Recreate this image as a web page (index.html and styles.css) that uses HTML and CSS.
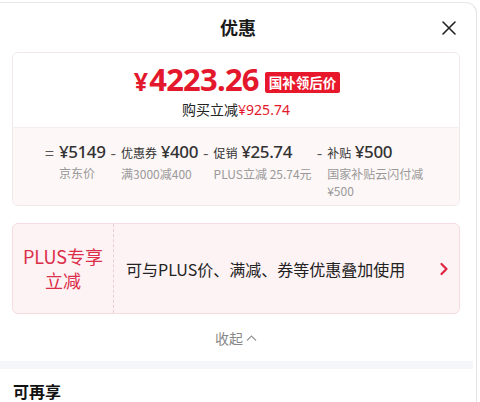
FILE: index.html
```html
<!DOCTYPE html>
<html lang="zh-CN">
<head>
<meta charset="utf-8">
<link rel="stylesheet" href="styles.css">
</head>
<body>
<div class="panel">
  <div class="header">
    <div class="title">优惠</div>
    <svg class="close" width="16" height="16" viewBox="0 0 16 16"><path d="M2 2 L14 14 M14 2 L2 14" stroke="#222" stroke-width="1.6" fill="none" stroke-linecap="round"/></svg>
  </div>

  <div class="card">
    <div class="card-top">
      <div class="price-line">
        <span class="price"><span class="yen">¥</span>4223.26</span>
        <span class="badge">国补领后价</span>
      </div>
      <div class="save">购买立减<span class="red">¥925.74</span></div>
    </div>
    <div class="card-bottom">
      <div class="calc">
        <span class="op">=</span>
        <div class="col">
          <div class="val"><span class="num">¥5149</span></div>
          <div class="lbl">京东价</div>
        </div>
        <span class="op">-</span>
        <div class="col">
          <div class="val"><span class="kind">优惠券</span> <span class="num">¥400</span></div>
          <div class="lbl">满3000减400</div>
        </div>
        <span class="op">-</span>
        <div class="col">
          <div class="val"><span class="kind">促销</span> <span class="num">¥25.74</span></div>
          <div class="lbl">PLUS立减 25.74元</div>
        </div>
        <span class="op">-</span>
        <div class="col col-last">
          <div class="val"><span class="kind">补贴</span> <span class="num">¥500</span></div>
          <div class="lbl">国家补贴云闪付减¥500</div>
        </div>
      </div>
    </div>
  </div>

  <div class="plus-card">
    <div class="plus-left">PLUS专享<br>立减</div>
    <div class="plus-text">可与PLUS价、满减、券等优惠叠加使用</div>
    <svg class="chev" width="10" height="14" viewBox="0 0 10 14"><path d="M2.5 2 L7.5 7 L2.5 12" stroke="#e2233f" stroke-width="2.2" fill="none" stroke-linecap="round" stroke-linejoin="round"/></svg>
  </div>

  <div class="collapse">收起 <svg class="caret" width="11" height="8" viewBox="0 0 11 8"><path d="M1 6.5 L5.5 2 L10 6.5" stroke="#999" stroke-width="1.2" fill="none"/></svg></div>

  <div class="band"></div>

  <div class="more">可再享</div>
</div>
</body>
</html>
```

FILE: styles.css
```css
* { box-sizing: border-box; margin: 0; padding: 0; }
html, body { background: #fff; }
body {
  font-family: "Noto Sans CJK SC", "Noto Sans", sans-serif;
  color: #222;
  width: 480px;
  height: 402px;
  overflow: hidden;
}
.panel {
  margin-top: 2px;
  width: 477px;
  height: 400px;
  border-top: 1px solid #e8e8e8;
  border-right: 1px solid #e4e4e4;
  border-top-right-radius: 11px;
  background: #fff;
}
.header {
  position: relative;
  padding-top: 11px;
  height: 49px;
  text-align: center;
}
.title {
  font-size: 18px;
  font-weight: 700;
  line-height: 26px;
  color: #1a1a1a;
}
.close {
  position: absolute;
  right: 19px;
  top: 17px;
}
.card {
  margin: 0 16px 0 12px;
  border: 1px solid #f0e8e8;
  border-radius: 6px;
  overflow: hidden;
  height: 154px;
}
.card-top {
  background: #fff;
  padding-top: 9px;
  height: 74px;
  text-align: center;
}
.price-line {
  display: flex;
  justify-content: center;
  align-items: center;
  height: 37px;
  padding-left: 2px;
}
.price {
  font-family: "Noto Sans", sans-serif;
  font-weight: 700;
  font-size: 31px;
  color: #e3182d;
  letter-spacing: -0.8px;
  line-height: 37px;
}
.yen { font-size: 25px; margin-right: 2px; }
.badge {
  margin-left: 6px;
  background: #e8182c;
  color: #fff;
  font-size: 13.5px;
  font-weight: 700;
  line-height: 21px;
  height: 21px;
  padding: 0 4px;
  border-radius: 2px;
  margin-top: 3px;
}
.save {
  font-size: 14px;
  line-height: 20px;
  color: #222;
}
.red { color: #e3182d; font-family: "Noto Sans", "Noto Sans CJK SC", sans-serif; }
.card-bottom {
  background: #fdf7f7;
  border-top: 1px solid #f5eeee;
  height: 78px;
  padding: 11px 0 0 32px;
}
.calc {
  display: flex;
  gap: 5px;
  align-items: flex-start;
}
.op {
  font-size: 16px;
  line-height: 24px;
  color: #555;
  padding-top: 1px;
}
.col { display: flex; flex-direction: column; }
.col-last { width: 102px; }
.val {
  line-height: 24px;
  white-space: nowrap;
  color: #333;
}
.kind { font-size: 12px; color: #333; }
.num {
  font-family: "Noto Sans", sans-serif;
  font-size: 17px;
  font-weight: 500;
  letter-spacing: -0.4px;
  color: #333;
}
.lbl {
  font-size: 12px;
  line-height: 17px;
  color: #999;
}
.plus-card {
  margin: 17px 16px 0 12px;
  height: 91px;
  border: 1px solid #f5dce1;
  border-radius: 6px;
  background: #fdf2f4;
  display: flex;
  align-items: stretch;
}
.plus-left {
  width: 101px;
  border-right: 1px dashed #e9cfd5;
  display: flex;
  align-items: center;
  justify-content: center;
  text-align: center;
  font-size: 18px;
  line-height: 24px;
  color: #dc2e48;
  padding-bottom: 2px;
}
.plus-text {
  flex: 1;
  display: flex;
  align-items: center;
  padding-left: 12px;
  font-size: 16px;
  color: #222;
}
.chev {
  align-self: center;
  margin-right: 10px;
}
.collapse {
  height: 47px;
  display: flex;
  align-items: center;
  justify-content: center;
  gap: 3px;
  font-size: 14px;
  color: #888;
  padding-right: 4px;
}
.band {
  height: 8px;
  background: #f5f6fa;
  margin-right: 3px;
}
.more {
  padding: 11px 0 0 13px;
  font-size: 16px;
  font-weight: 700;
  line-height: 22px;
  color: #111;
}
```
